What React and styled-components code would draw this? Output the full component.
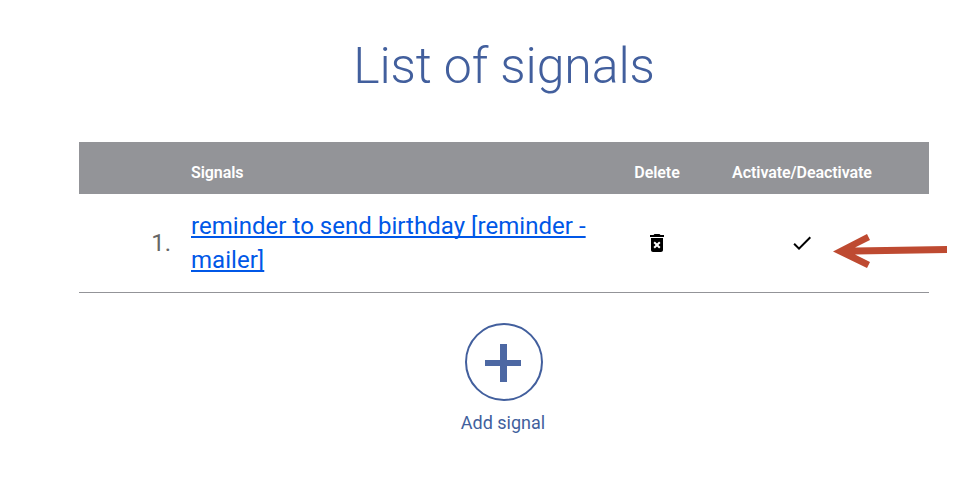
import React from 'react'
import styled, { createGlobalStyle } from 'styled-components'
import { MdCheck, MdDeleteForever } from 'react-icons/md'

const signals = [
  { id: 1, name: 'reminder to send birthday [reminder - mailer]' },
]

const App = () => (
  <Page>
    <GlobalStyle />
    <Title>List of signals</Title>
    <List>
      <HeaderRow>
        <Heading $column={2}>Signals</Heading>
        <Heading $column={3} $center>Delete</Heading>
        <Heading $column={4} $center>Activate/Deactivate</Heading>
      </HeaderRow>
      {signals.map((signal, index) => (
        <SignalRow key={signal.id}>
          <Index>{index + 1}.</Index>
          <SignalLink href="#">{signal.name}</SignalLink>
          <IconButton aria-label="Delete"><MdDeleteForever /></IconButton>
          <IconButton aria-label="Activate/Deactivate"><MdCheck /></IconButton>
          <Arrow viewBox="0 0 114 36">
            <path d="M0 18.5 L34 1 L37 7 L22 14.5 L114 13 V20 L22 21.5 L37 29 L34 35 Z" />
          </Arrow>
        </SignalRow>
      ))}
    </List>
    <AddSignal>
      <Circle>
        <Plus viewBox="0 0 36 38">
          <path d="M15 0h7v16h14v6H22v16h-7V22H0v-6h15z" />
        </Plus>
      </Circle>
      <AddLabel>Add signal</AddLabel>
    </AddSignal>
  </Page>
)

export default App

const GlobalStyle = createGlobalStyle`
  body {
    margin: 0;
    background: #fff;
    font-family: Roboto, sans-serif;
    overflow: hidden;
  }
`

const Page = styled.div`
  display: flex;
  flex-direction: column;
  align-items: center;
  width: 850px;
  margin-left: 79px;
  padding-top: 36px;
`

const Title = styled.h1`
  margin: 0 0 46px;
  color: #425f9d;
  font-size: 50px;
  font-weight: 300;
  line-height: 60px;
  letter-spacing: -0.1px;
  white-space: nowrap;
`

const List = styled.div`
  width: 100%;
`

const Row = styled.div`
  display: grid;
  grid-template-columns: 112px 421px 90px 200px;
  align-items: center;
`

const HeaderRow = styled(Row)`
  height: 52px;
  padding-top: 9px;
  box-sizing: border-box;
  background: #939498;
`

const Heading = styled.div`
  grid-column: ${props => props.$column};
  color: #fff;
  font-size: 16px;
  font-weight: 600;
  letter-spacing: -0.07px;
  text-align: ${props => props.$center ? 'center' : 'left'};
`

const SignalRow = styled(Row)`
  position: relative;
  height: 99px;
  box-sizing: border-box;
  border-bottom: 1px solid #939498;
`

const Index = styled.div`
  padding-right: 20px;
  color: #666;
  font-size: 24px;
  text-align: right;
`

const SignalLink = styled.a`
  color: #0057e7;
  font-size: 24px;
  line-height: 34px;
  letter-spacing: 0.04px;
  text-decoration: underline;
  text-decoration-skip-ink: none;
`

const IconButton = styled.button`
  display: flex;
  justify-content: center;
  padding: 0;
  border: 0;
  background: none;
  color: #000;
  font-size: 24px;
`

const Arrow = styled.svg`
  position: absolute;
  left: 754px;
  top: 39px;
  width: 114px;
  height: 36px;
  fill: #be4a31;
`

const AddSignal = styled.div`
  display: flex;
  flex-direction: column;
  align-items: center;
  margin-top: 30px;
  color: #425f9d;
`

const Circle = styled.div`
  display: flex;
  align-items: center;
  justify-content: center;
  width: 78px;
  height: 78px;
  margin-bottom: 11px;
  box-sizing: border-box;
  border: 2px solid #425f9d;
  border-radius: 50%;
`

const Plus = styled.svg`
  width: 36px;
  height: 38px;
  margin: 2px 2px 0 0;
  fill: #4d68a3;
`

const AddLabel = styled.div`
  padding-right: 2px;
  font-size: 18px;
  line-height: 22px;
`
